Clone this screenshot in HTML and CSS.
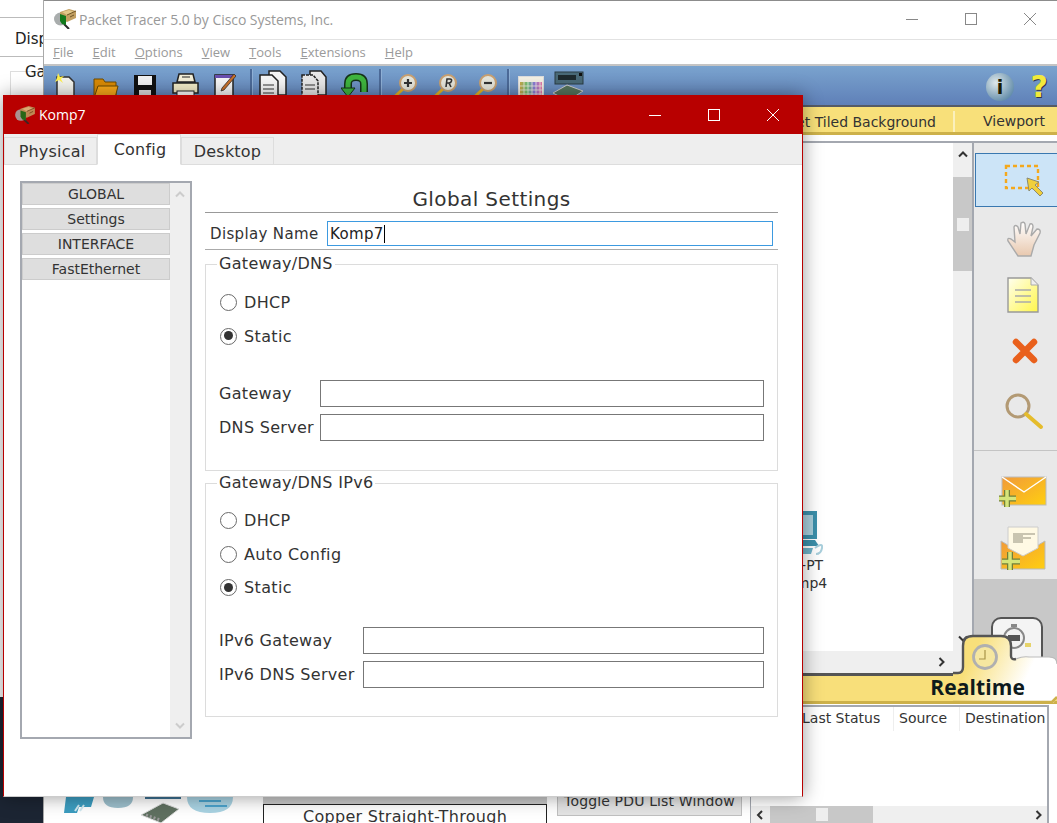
FILE: index.html
```html
<!DOCTYPE html>
<html lang="en">
<head>
<meta charset="UTF-8" />
<title>Packet Tracer 5.0 by Cisco Systems, Inc.</title>
<link rel="stylesheet" href="styles.css">
</head>
<body>

<svg class="defs" width="0" height="0">
  <symbol id="pt-logo" viewBox="0 0 22 20">
    <circle cx="6.500" cy="10" r="6.500" fill="#a9adad"/>
    <path d="M10 15 L15 20" stroke="#2a2a2a" stroke-width="2"/>
    <path d="M6 3 L15 0 L22 2 L22 9 L13 13 L6 9Z" fill="#c2a062"/>
    <path d="M8 3 L15 1 L20 3 L13 6Z" fill="#e2c98a"/>
    <path d="M6 5 L12 7 L12 16 L8 15 L6 12Z" fill="#127a1c"/>
    <path d="M13 6 L22 2 M16 8 L20 6" stroke="#6f5526"/>
  </symbol>
</svg>

<!-- ventana de atras -->
<div class="back-window">
  <div class="back-disp">Display Name</div>
  <div class="back-group">Gateway/DNS</div>
  <div class="back-dark"></div>
</div>

<!-- ventana principal -->
<div class="main-window">
  <div class="titlebar">
    <svg class="logo" width="22" height="20"><use href="#pt-logo"/></svg>
    <span class="title-text">Packet Tracer 5.0 by Cisco Systems, Inc.</span>
    <div class="win-buttons">
      <svg width="14" height="14" viewBox="0 0 14 14"><path d="M1 7.500H13" stroke="#888"/></svg>
      <svg width="14" height="14" viewBox="0 0 14 14"><rect x="1.500" y="1.500" width="11" height="11" fill="none" stroke="#888"/></svg>
      <svg width="14" height="14" viewBox="0 0 14 14"><path d="M1 1L13 13M13 1L1 13" stroke="#888"/></svg>
    </div>
  </div>

  <div class="menubar">
    <span><u>F</u>ile</span>
    <span><u>E</u>dit</span>
    <span><u>O</u>ptions</span>
    <span><u>V</u>iew</span>
    <span><u>T</u>ools</span>
    <span><u>E</u>xtensions</span>
    <span><u>H</u>elp</span>
  </div>

  <div class="toolbar">
    <svg class="tool t-new" width="22" height="30" viewBox="0 0 22 30"><path d="M3 4H15L20 9V29H3Z" fill="#f4f4ee" stroke="#333" stroke-width="1.500"/><path d="M4 0L6 4L10 3L7 6L9 10L5 7L1 9L3 5Z" fill="#fff04d"/></svg>
    <svg class="tool t-open" width="26" height="24" viewBox="0 0 26 24"><path d="M1 3H10L12 6H23V22H1Z" fill="#d98a06" stroke="#6d4a00"/><path d="M1 22L5 10H25L22 22Z" fill="#f9a81a" stroke="#6d4a00"/></svg>
    <svg class="tool t-save" width="22" height="24" viewBox="0 0 22 24"><path d="M0 0H22V24H0Z" fill="#111"/><rect x="4" y="1" width="14" height="9" fill="#f2f2f2"/><rect x="5" y="15" width="12" height="9" fill="#ddd"/></svg>
    <svg class="tool t-print" width="27" height="24" viewBox="0 0 27 24"><path d="M7 1H21L23 9H5Z" fill="#f4efd8" stroke="#222" stroke-width="1.500"/><path d="M10 4H18" stroke="#222"/><path d="M1 10H26V20H1Z" fill="#f3ecc8" stroke="#222" stroke-width="1.500"/><rect x="5" y="18" width="17" height="6" fill="#fff" stroke="#222"/></svg>
    <svg class="tool t-note" width="22" height="26" viewBox="0 0 22 26"><path d="M1 3H19V25H1Z" fill="#f6f6f6" stroke="#222" stroke-width="1.500"/><rect x="1" y="3" width="18" height="3" fill="#6a4fb0"/><path d="M8 16L20 2L22 4L10 18L7 19Z" fill="#c8702a" stroke="#222" stroke-width=".7"/></svg>
    <div class="tool-sep t-sep1"></div>
    <svg class="tool t-copy" width="28" height="30" viewBox="0 0 28 30"><path d="M10 1H21L27 7V25H10Z" fill="#f6f6f6" stroke="#222" stroke-width="1.500"/><path d="M1 5H13L19 11V30H1Z" fill="#f6f6f6" stroke="#222" stroke-width="1.500"/><path d="M4 15H15M4 19H15M4 23H15" stroke="#333"/></svg>
    <svg class="tool t-paste" width="26" height="30" viewBox="0 0 26 30"><path d="M9 1H20L25 7V25H9Z" fill="#e8e8e8" stroke="#222" stroke-width="1.500"/><path d="M1 5H12L17 11V30H1Z" fill="#e8e8e8" stroke="#222" stroke-width="1.500" stroke-dasharray="3 1"/><path d="M4 15H14M4 19H14" stroke="#333"/></svg>
    <svg class="tool t-undo" width="28" height="28" viewBox="0 0 28 28"><path d="M7 18V12Q7 5 15 5Q23 5 23 12V20" fill="none" stroke="#16331a" stroke-width="8"/><path d="M7 18V12Q7 5 15 5Q23 5 23 12V20" fill="none" stroke="#3fb53f" stroke-width="5"/><path d="M0 16H14L7 25Z" fill="#3fb53f" stroke="#16331a"/></svg>
    <div class="tool-sep t-sep2"></div>
    <svg class="tool t-zoom" width="30" height="30" viewBox="0 0 30 30"><path d="M2 28L15 16" stroke="#e9b320" stroke-width="3"/><circle cx="20" cy="10" r="8" fill="#e6e6dc" stroke="#c9a070" stroke-width="2"/><path d="M16 10H24M20 6V14" stroke="#333" stroke-width="2.200"/></svg>
    <svg class="tool t-zoomr" width="30" height="30" viewBox="0 0 30 30"><path d="M2 28L15 16" stroke="#e9b320" stroke-width="3"/><circle cx="20" cy="10" r="8" fill="#e6e6dc" stroke="#c9a070" stroke-width="2"/><path d="M18 14L19 6H22Q24 6 23.500 8T21 10H18.500M21 10L23 14" fill="none" stroke="#333" stroke-width="1.600"/></svg>
    <svg class="tool t-zoomo" width="30" height="30" viewBox="0 0 30 30"><path d="M2 28L15 16" stroke="#e9b320" stroke-width="3"/><circle cx="20" cy="10" r="8" fill="#e6e6dc" stroke="#c9a070" stroke-width="2"/><path d="M16 10H24" stroke="#333" stroke-width="2.200"/></svg>
    <div class="tool-sep t-sep3"></div>
    <svg class="tool t-palette" width="26" height="24" viewBox="0 0 26 24">
      <defs><linearGradient id="pal" x1="0" x2="1"><stop offset="0" stop-color="#c9a84a"/><stop offset=".35" stop-color="#6cc47c"/><stop offset=".65" stop-color="#8a7ad8"/><stop offset="1" stop-color="#e878a8"/></linearGradient></defs>
      <rect x=".5" y=".5" width="25" height="23" fill="#f4f0e4" stroke="#ddd"/>
      <rect x="2" y="6" width="22" height="17" fill="url(#pal)"/>
      <path d="M6 6V23M10 6V23M14 6V23M18 6V23M22 6V23M2 10H24M2 14H24M2 18H24" stroke="#f4f0e4" stroke-width=".8"/>
    </svg>
    <svg class="tool t-device" width="32" height="30" viewBox="0 0 32 30"><rect x="2" y="1" width="28" height="12" fill="#4a6a78" stroke="#2a3c44"/><rect x="5" y="4" width="18" height="5" fill="#1e2a2e"/><rect x="26" y="2" width="3" height="3" fill="#111"/><path d="M0 22L14 14L30 20L15 30Z" fill="#55745c" stroke="#ccc"/></svg>
    <div class="toolbar-right">
      <svg width="28" height="30" viewBox="0 0 28 30"><defs><radialGradient id="infob" cx=".35" cy=".35" r=".75"><stop offset="0" stop-color="#dfe8ea"/><stop offset="1" stop-color="#5b87a6"/></radialGradient></defs><circle cx="14" cy="15" r="14" fill="url(#infob)"/><text x="14" y="22" class="info-i">i</text></svg>
      <span class="help-q">?</span>
    </div>
  </div>

  <div class="yellowbar">
    <span class="yb-item yb-tiled">Set Tiled Background</span>
    <span class="yb-item yb-view">Viewport</span>
  </div>

  <div class="work-row">
    <div class="canvas-col">
      <div class="canvas-line">
        <div class="canvas">
          <div class="node">
            <svg width="40" height="46" viewBox="0 0 40 46"><rect x="8" y="1" width="26" height="28" fill="#3c90ab"/><rect x="12" y="5" width="18" height="20" fill="#a9cfdc"/><path d="M12 30H32L36 36H8Z" fill="#3c90ab"/><path d="M10 38H30L28 44H8Z" fill="#6fb3c9"/><path d="M32 38Q40 32 39 38T33 44" fill="none" stroke="#a9cfdc" stroke-width="2"/></svg>
            <div>PC-PT</div>
            <div>Komp4</div>
          </div>
        </div>
        <div class="vscroll">
          <svg class="sb-arrow" width="12" height="8" viewBox="0 0 12 8"><path d="M2 6.500L6 2.500L10 6.500" fill="none" stroke="#333" stroke-width="2"/></svg>
          <div class="vthumb"><span class="grip"></span></div>
          <svg class="sb-down" width="12" height="8" viewBox="0 0 12 8"><path d="M2 1.500L6 5.500L10 1.500" fill="none" stroke="#333" stroke-width="2"/></svg>
        </div>
      </div>
      <div class="hscroll">
        <svg width="8" height="12" viewBox="0 0 8 12"><path d="M1.500 2L5.500 6L1.500 10" fill="none" stroke="#333" stroke-width="2"/></svg>
      </div>
    </div>

    <div class="side">
      <div class="side-tools">
        <div class="side-btn selected">
          <svg width="40" height="36" viewBox="0 0 40 36"><rect x="2" y="2" width="32" height="22" fill="none" stroke="#f4a81c" stroke-width="2.400" stroke-dasharray="4 3"/><path d="M23 14L25 27L28 24L36 32L39 29L31 21L35 18Z" fill="#f0cf3c" stroke="#8a8a70"/></svg>
        </div>
        <svg class="side-icon hand" width="38" height="36" viewBox="0 0 38 36"><defs><linearGradient id="handg" x1="0" y1="0" x2="0" y2="1"><stop offset="0" stop-color="#fff"/><stop offset="1" stop-color="#e8c8ae"/></linearGradient></defs><path d="M12 35L2 20Q1 16 5 18L9 21L8 6Q9 3 12 6L14 13L15 2Q18 0 19 3L20 13L24 3Q27 2 27 6L25 15L31 8Q35 8 34 12L28 24L25 35Z" fill="url(#handg)" stroke="#aaa" stroke-width="1.400"/></svg>
        <svg class="side-icon note" width="32" height="36" viewBox="0 0 32 36"><defs><linearGradient id="noteg" x1="0" y1="0" x2="1" y2="1"><stop offset="0" stop-color="#fffff0"/><stop offset="1" stop-color="#fff64a"/></linearGradient></defs><path d="M1 1H24L31 8V35H1Z" fill="url(#noteg)" stroke="#999" stroke-width="1.400"/><path d="M24 1V8H31" fill="#eee" stroke="#aaa"/><path d="M8 13H24M8 19H24M8 25H24" stroke="#aaa" stroke-width="1.600"/></svg>
        <svg class="side-icon del" width="26" height="26" viewBox="0 0 26 26"><path d="M4 4L22 22M22 4L4 22" stroke="#e9601c" stroke-width="6.500" stroke-linecap="round"/></svg>
        <svg class="side-icon mag" width="40" height="38" viewBox="0 0 40 38"><circle cx="14" cy="14" r="11" fill="none" stroke="#b39a74" stroke-width="3"/><path d="M22 22L37 35" stroke="#e5bc2c" stroke-width="4" stroke-linecap="round"/></svg>
      </div>
      <div class="side-mail">
        <svg class="mail1" width="50" height="32" viewBox="0 0 50 32"><defs><linearGradient id="mailg" x1="0" y1="0" x2="1" y2="1"><stop offset="0" stop-color="#f19a3a"/><stop offset="1" stop-color="#ffcf10"/></linearGradient></defs><rect x="5" y="1" width="44" height="28" fill="url(#mailg)" stroke="#bbb"/><path d="M5 1L27 16L49 1" fill="none" stroke="#fff" stroke-width="1.400"/><path d="M10 14V31M2 22.500H19" stroke="#6f7f3a" stroke-width="6"/><path d="M10 14V31M2 22.500H19" stroke="#d5e57a" stroke-width="3.500"/></svg>
        <svg class="mail2" width="46" height="46" viewBox="0 0 46 46"><path d="M1 15L23 28L45 15V43H1Z" fill="url(#mailg)" stroke="#bbb"/><path d="M8 1H38V22L23 30L8 22Z" fill="#fff9e4" stroke="#ccc"/><rect x="13" y="7" width="10" height="10" fill="#c9c4b0"/><path d="M23 8H35M23 12H31" stroke="#c9c4b0" stroke-width="2"/><path d="M10 26V44M2 35.500H20" stroke="#6f7f3a" stroke-width="6"/><path d="M10 26V44M2 35.500H20" stroke="#d5e57a" stroke-width="3.500"/></svg>
      </div>
      <div class="side-sim">
        <div class="sim-btn">
          <svg width="36" height="30" viewBox="0 0 36 30"><circle cx="15" cy="15" r="10" fill="#f2f2f2" stroke="#888" stroke-width="2"/><rect x="9" y="12" width="12" height="6" fill="#555"/><rect x="12" y="1" width="6" height="3" fill="#888"/><rect x="26" y="20" width="6" height="4" fill="#e6d36a"/></svg>
        </div>
      </div>
    </div>
  </div>

  <div class="realtime-bar">
    <span class="realtime-text">Realtime</span>
  </div>
  <svg class="realtime-tab" width="104" height="72" viewBox="0 0 104 72">
    <defs><linearGradient id="tabg" x1="0" y1="0" x2="1" y2=".3"><stop offset=".25" stop-color="#f8df7a"/><stop offset=".82" stop-color="#fff"/></linearGradient></defs>
    <path d="M0 39H5Q10 39 10 33V12Q10 2 20 2H48Q58 2 58 12V22Q58 26 63 25Q70 22 76 23H96Q104 23 104 30V64L100 69H0Z" fill="url(#tabg)"/>
    <path d="M0 39H5Q10 39 10 33V12Q10 2 20 2H48Q58 2 58 12V22Q58 26 63 25" fill="none" stroke="#555" stroke-width="2.400"/>
    <path d="M63 25Q70 22 76 23H96Q104 23 104 30" fill="none" stroke="#bbb" stroke-width="1.200"/>
    <path d="M0 68H99L104 63" fill="none" stroke="#cdb14a" stroke-width="2.500"/>
    <circle cx="32" cy="23" r="11.500" fill="#f6e7a0" stroke="#b0b0b0" stroke-width="2.800"/>
    <path d="M32 16V25H26" fill="none" stroke="#a89448" stroke-width="1.200"/>
  </svg>

  <div class="bottom-row">
    <div class="devices">
      <svg width="34" height="16" viewBox="0 0 34 16"><path d="M3 0H31L28 10H16L14 16H1Z" fill="#3c9dc0"/><path d="M12 14L16 8M17 14L21 8" stroke="#cfe8f0" stroke-width="2"/></svg>
      <svg width="30" height="11" viewBox="0 0 30 11"><path d="M0 0H30Q30 11 15 11T0 0Z" fill="#9cbfcc"/></svg>
      <svg width="42" height="26" viewBox="0 0 42 26"><rect x="6" y="0" width="36" height="2" fill="#3c6f90"/><path d="M2 18L24 6L40 12L22 26Z" fill="#5f7060" stroke="#ddd"/><path d="M7 18L21 23" stroke="#999" stroke-width="3" stroke-dasharray="2 2"/></svg>
      <svg width="46" height="16" viewBox="0 0 46 16"><path d="M0 0H46Q46 16 23 16T0 0Z" fill="#a9d3e3"/><path d="M12 4H34M18 9H40" stroke="#4aa3cc" stroke-width="2"/></svg>
    </div>
    <div class="cable-col">
      <div class="cable-thumb"></div>
      <div class="cable-box">Copper Straight-Through</div>
    </div>
    <div class="toggle-btn">Toggle PDU List Window</div>
    <div class="pdu">
      <div class="pdu-head">
        <span class="ph-status">Last Status</span>
        <span class="ph-source">Source</span>
        <span class="ph-dest">Destination</span>
      </div>
      <div class="pdu-scroll">
        <svg class="pdu-left" width="8" height="12" viewBox="0 0 8 12"><path d="M6 2L2 6L6 10" fill="none" stroke="#333" stroke-width="2"/></svg>
        <div class="pdu-thumb"><span class="grip"></span></div>
        <svg class="pdu-right" width="8" height="12" viewBox="0 0 8 12"><path d="M1.500 2L5.500 6L1.500 10" fill="none" stroke="#333" stroke-width="2"/></svg>
      </div>
    </div>
  </div>
</div>

<!-- dialogo Komp7 -->
<div class="dialog">
  <div class="dlg-title">
    <svg class="dlg-logo" width="20" height="18"><use href="#pt-logo"/></svg>
    <span class="dlg-name">Komp7</span>
    <div class="dlg-buttons">
      <svg width="14" height="14" viewBox="0 0 14 14"><path d="M1 7.500H13" stroke="#fff"/></svg>
      <svg width="14" height="14" viewBox="0 0 14 14"><rect x="1.500" y="1.500" width="11" height="11" fill="none" stroke="#fff"/></svg>
      <svg width="14" height="14" viewBox="0 0 14 14"><path d="M1 1L13 13M13 1L1 13" stroke="#fff"/></svg>
    </div>
  </div>

  <div class="tabs">
    <div class="tab tab-physical">Physical</div>
    <div class="tab tab-config active">Config</div>
    <div class="tab tab-desktop">Desktop</div>
  </div>

  <div class="dlg-body">
    <div class="sidelist">
      <div class="list-items">
        <div class="list-item">GLOBAL</div>
        <div class="list-item">Settings</div>
        <div class="list-item">INTERFACE</div>
        <div class="list-item">FastEthernet</div>
      </div>
      <div class="list-scroll">
        <svg width="12" height="8" viewBox="0 0 12 8"><path d="M2 6.500L6 2.500L10 6.500" fill="none" stroke="#ccc" stroke-width="2"/></svg>
        <svg width="12" height="8" viewBox="0 0 12 8"><path d="M2 1.500L6 5.500L10 1.500" fill="none" stroke="#ccc" stroke-width="2"/></svg>
      </div>
    </div>

    <div class="settings">
      <h2 class="settings-title">Global Settings</h2>
      <div class="name-row">
        <label>Display Name</label>
        <div class="name-input">Komp7<span class="caret"></span></div>
      </div>

      <fieldset class="group group-dns">
        <legend>Gateway/DNS</legend>
        <label class="radio-row"><span class="radio"></span>DHCP</label>
        <label class="radio-row"><span class="radio on"></span>Static</label>
        <div class="field-row first">
          <label class="lbl-dns">Gateway</label>
          <input type="text" />
        </div>
        <div class="field-row">
          <label class="lbl-dns">DNS Server</label>
          <input type="text" />
        </div>
      </fieldset>

      <fieldset class="group group-v6">
        <legend>Gateway/DNS IPv6</legend>
        <label class="radio-row"><span class="radio"></span>DHCP</label>
        <label class="radio-row"><span class="radio"></span>Auto Config</label>
        <label class="radio-row"><span class="radio on"></span>Static</label>
        <div class="field-row first">
          <label class="lbl-v6">IPv6 Gateway</label>
          <input type="text" />
        </div>
        <div class="field-row">
          <label class="lbl-v6">IPv6 DNS Server</label>
          <input type="text" />
        </div>
      </fieldset>
    </div>
  </div>
</div>

</body>
</html>
```

FILE: styles.css
```css
html, body {
  margin: 0;
  height: 100%;
  overflow: hidden;
  background: #fff;
}
body {
  position: relative;
  width: 1057px;
  height: 823px;
  font-family: "DejaVu Sans", sans-serif;
  color: #222;
}
.defs {
  position: absolute;
}

/* ventana de atras */
.back-window {
  position: absolute;
  left: 0;
  top: 0;
  width: 44px;
  height: 823px;
  overflow: hidden;
  background: #fff;
}
.back-disp {
  margin-top: 17px;
  height: 38px;
  line-height: 42px;
  padding-left: 15px;
  white-space: nowrap;
  font-size: 15px;
  border-top: 1px solid #bbb;
  border-bottom: 1px solid #bbb;
}
.back-group {
  margin: 14px 0 0 10px;
  width: 200px;
  height: 300px;
  padding-left: 14px;
  white-space: nowrap;
  font-size: 15px;
  line-height: 0;
  border: 1px solid #ddd;
}
.back-dark {
  position: absolute;
  left: 0;
  top: 697px;
  width: 44px;
  height: 126px;
  background: #1c2533;
}

/* ventana principal */
.main-window {
  position: absolute;
  left: 44px;
  top: 0;
  width: 1013px;
  height: 823px;
  overflow: hidden;
  background: #fff;
  display: flex;
  flex-direction: column;
  border-top: 1px solid #8c8c8c;
  box-sizing: border-box;
  box-shadow: -1px 0 0 #aaa;
}
.titlebar {
  flex: none;
  height: 36px;
  padding-bottom: 2px;
  display: flex;
  align-items: center;
  border-bottom: 1px solid #e2e2e2;
}
.logo {
  margin-left: 10px;
  margin-right: 3px;
}
.title-text {
  font-family: "Open Sans", sans-serif;
  font-size: 14px;
  letter-spacing: -.05px;
  color: #999;
}
.win-buttons {
  margin-left: auto;
  display: flex;
  gap: 45px;
  padding-right: 20px;
}
.menubar {
  flex: none;
  height: 24px;
  padding-left: 9px;
  display: flex;
  align-items: center;
  gap: 19px;
  font-family: "Open Sans", sans-serif;
  font-size: 13px;
  color: #9a9a9a;
  border-bottom: 2px solid #c4c4c4;
}
.toolbar {
  flex: none;
  height: 41px;
  box-sizing: border-box;
  display: flex;
  align-items: flex-start;
  padding-top: 6px;
  background: linear-gradient(#7aa3ce, #5f80b8);
  border-bottom: 2px solid #555b66;
  position: relative;
}
.tool {
  flex: none;
}
.t-new { margin: 1px 0 0 10px; }
.t-open { margin: 4px 0 0 17px; }
.t-save { margin: 3px 0 0 15px; }
.t-print { margin: 1px 0 0 16px; }
.t-note { margin: 0 0 0 15px; }
.tool-sep {
  flex: none;
  width: 2px;
  height: 37px;
  margin-top: -3px;
  background: #4c6a98;
  border-right: 1px solid #8fb0d6;
}
.t-sep1 { margin-left: 14px; }
.t-copy { margin: -2px 0 0 6px; }
.t-paste { margin: -2px 0 0 14px; }
.t-undo { margin: 0 0 0 14px; }
.t-sep2 { margin-left: 10px; }
.t-zoom { margin: 1px 0 0 6px; }
.t-zoomr { margin: 1px 0 0 10px; }
.t-zoomo { margin: 1px 0 0 10px; }
.t-sep3 { margin-left: 9px; }
.t-palette { margin: 4px 0 0 8px; }
.t-device { margin: -1px 0 0 9px; }
.toolbar-right {
  margin-left: auto;
  padding-right: 9px;
  display: flex;
  align-items: center;
  gap: 17px;
}
.info-i {
  font-family: "DejaVu Sans", sans-serif;
  font-weight: bold;
  font-size: 19px;
  text-anchor: middle;
  fill: #1b1b00;
}
.help-q {
  font-family: "DejaVu Sans", sans-serif;
  font-weight: bold;
  font-size: 30px;
  line-height: 30px;
  color: #f2ea3a;
  text-shadow: 1px 1px 0 #334;
}
.yellowbar {
  flex: none;
  height: 28px;
  box-sizing: border-box;
  padding-top: 4px;
  background: #f8e07a;
  border-bottom: 3px solid #cdb14a;
  display: flex;
  justify-content: flex-end;
  align-items: center;
  font-size: 14px;
  color: #333;
}
.yb-item {
  white-space: nowrap;
}
.yb-view {
  width: 104px;
  box-sizing: border-box;
  padding-left: 28px;
  margin-left: 17px;
  border-left: 2px solid #fbf0bc;
  line-height: 21px;
}
.work-row {
  flex: none;
  margin-top: 6px;
  height: 532px;
  display: flex;
  border-top: 2px solid #a4a8b0;
  box-sizing: border-box;
}
.canvas-col {
  flex: none;
  width: 928px;
  display: flex;
  flex-direction: column;
  border-right: 2px solid #a4a8b0;
}
.canvas-line {
  flex: 1;
  display: flex;
  min-height: 0;
}
.canvas {
  flex: 1;
  position: relative;
  background: #fff;
}
.node {
  position: absolute;
  left: 739px;
  top: 367px;
  width: 40px;
  font-size: 14px;
  line-height: 18px;
  white-space: nowrap;
  display: flex;
  flex-direction: column;
  align-items: center;
  color: #333;
}
.vscroll {
  flex: none;
  width: 19px;
  background: #efefef;
  display: flex;
  flex-direction: column;
  align-items: center;
}
.sb-arrow {
  margin-top: 7px;
}
.sb-down {
  margin-top: auto;
  margin-bottom: 8px;
}
.vthumb {
  margin-top: 19px;
  width: 100%;
  height: 94px;
  background: #c8c8c8;
  display: flex;
  align-items: center;
  justify-content: center;
}
.grip {
  display: block;
  width: 12px;
  height: 13px;
  background: #eee;
}
.hscroll {
  flex: none;
  height: 22px;
  background: #efefef;
  display: flex;
  align-items: center;
  justify-content: flex-end;
  padding-right: 26px;
}
.side {
  flex: 1;
  background: #e9e9e9;
  display: flex;
  flex-direction: column;
}
.side-tools {
  height: 308px;
  display: flex;
  flex-direction: column;
  align-items: center;
  border-bottom: 1px solid #c4c4c4;
  padding-top: 10px;
  box-sizing: border-box;
}
.side-btn.selected {
  align-self: stretch;
  margin-left: 1px;
  height: 54px;
  box-sizing: border-box;
  background: #cce4f7;
  border: 1px solid #3a78b0;
  border-right: none;
  display: flex;
  align-items: center;
  justify-content: center;
  padding-left: 14px;
  padding-top: 4px;
}
.side-icon {
  display: block;
}
.hand { margin-top: 14px; margin-left: 18px; }
.note { margin-top: 20px; margin-left: 15px; }
.del { margin-top: 25px; margin-left: 18px; }
.mag { margin-top: 28px; margin-left: 16px; }
.side-mail {
  height: 128px;
  position: relative;
  display: flex;
  flex-direction: column;
  align-items: center;
}
.mail1 { margin-top: 25px; margin-left: 12px; }
.mail2 { margin-top: 18px; margin-left: 15px; }
.side-sim {
  flex: 1;
  background: #c8c8c8;
  padding: 38px 0 0 17px;
  overflow: hidden;
}
.sim-btn {
  width: 52px;
  height: 50px;
  background: #f4f4f4;
  border: 2px solid #555;
  border-radius: 10px;
  display: flex;
  justify-content: center;
  padding-top: 4px;
  box-sizing: border-box;
}
.realtime-bar {
  flex: none;
  height: 31px;
  box-sizing: border-box;
  background: #f8df7a;
  border-top: 3px solid #555;
  border-bottom: 3px solid #cdb14a;
  display: flex;
  justify-content: flex-end;
  align-items: center;
  padding-right: 32px;
  padding-bottom: 3px;
}
.realtime-text {
  font-family: "Open Sans", sans-serif;
  font-weight: bold;
  font-size: 21px;
  letter-spacing: .1px;
  color: #0e1a1c;
  position: relative;
  z-index: 4;
}
.realtime-tab {
  position: absolute;
  left: 909px;
  top: 633px;
  z-index: 2;
}
.bottom-row {
  flex: 1;
  display: flex;
  align-items: flex-end;
  position: relative;
  z-index: 3;
  min-height: 0;
}
.devices {
  flex: none;
  width: 200px;
  display: flex;
  align-self: flex-end;
  align-items: flex-start;
  gap: 6px;
  padding-left: 19px;
  height: 26px;
}
.cable-col {
  flex: none;
  width: 284px;
  display: flex;
  flex-direction: column;
}
.cable-thumb {
  height: 7px;
  background: #c8c8c8;
}
.cable-box {
  height: 19px;
  box-sizing: border-box;
  border: 1px solid #222;
  border-bottom: none;
  text-align: center;
  font-size: 16px;
  letter-spacing: .3px;
  line-height: 23px;
  white-space: nowrap;
  background: #fff;
  color: #333;
}
.toggle-btn {
  flex: none;
  margin: 0 8px 7px 10px;
  width: 185px;
  height: 24px;
  box-sizing: border-box;
  background: #e4e4e4;
  border: 1px solid #c0c0c0;
  text-align: center;
  font-size: 14px;
  letter-spacing: .15px;
  line-height: 17px;
  white-space: nowrap;
  color: #333;
}
.pdu {
  flex: none;
  width: 296px;
  align-self: stretch;
  margin-top: 1px;
  border-top: 2px solid #a4a8b0;
  border-right: 2px solid #a4a8b0;
  border-left: 1px solid #a4a8b0;
  display: flex;
  flex-direction: column;
  justify-content: space-between;
  background: #fff;
}
.pdu-head {
  position: relative;
  height: 22px;
  font-size: 14px;
  color: #333;
  line-height: 22px;
  white-space: nowrap;
}
.pdu-head span {
  position: absolute;
  top: 0;
  height: 24px;
}
.ph-status { left: 51px; }
.ph-source {
  left: 142px;
  padding-left: 5px;
  border-left: 1px solid #eee;
}
.ph-dest {
  left: 208px;
  padding-left: 5px;
  border-left: 1px solid #eee;
}
.pdu-scroll {
  height: 17px;
  background: #efefef;
  display: flex;
  align-items: center;
}
.pdu-left { margin-left: 5px; }
.pdu-thumb {
  margin-left: 6px;
  width: 103px;
  height: 100%;
  background: #c8c8c8;
  display: flex;
  justify-content: center;
  align-items: center;
}
.pdu-right { margin-left: auto; margin-right: 4px; }

/* dialogo */
.dialog {
  position: absolute;
  left: 3px;
  top: 95px;
  width: 800px;
  height: 702px;
  box-sizing: border-box;
  background: #fff;
  border: 1px solid #b80000;
  border-top: none;
  border-bottom-color: #ccc;
  box-shadow: 0 0 18px rgba(0, 0, 0, .4);
  display: flex;
  flex-direction: column;
  z-index: 10;
}
.dlg-title {
  flex: none;
  height: 39px;
  margin: 0 -1px;
  background: #b80000;
  display: flex;
  align-items: center;
}
.dlg-logo {
  margin-left: 12px;
  margin-right: 4px;
  opacity: .85;
}
.dlg-name {
  font-family: "Open Sans", sans-serif;
  font-size: 14px;
  color: #fff;
}
.dlg-buttons {
  margin-left: auto;
  display: flex;
  gap: 45px;
  padding-right: 23px;
}
.tabs {
  flex: none;
  height: 31px;
  background: #eee;
  display: flex;
  align-items: flex-end;
  border-bottom: 1px solid #ddd;
  box-sizing: border-box;
  font-size: 16px;
  letter-spacing: .2px;
  color: #333;
}
.tab {
  height: 27px;
  box-sizing: border-box;
  text-align: center;
  line-height: 27px;
  border: 1px solid #ddd;
  border-bottom: none;
}
.tab-physical {
  width: 93px;
  padding-left: 3px;
}
.tab-config {
  width: 84px;
  height: 31px;
  padding-left: 2px;
  background: #fff;
  line-height: 30px;
  margin-bottom: -1px;
  border-bottom: 1px solid #fff;
}
.tab-desktop { width: 93px; }
.dlg-body {
  flex: 1;
  display: flex;
  align-items: flex-start;
  padding: 16px 0 0 16px;
}
.sidelist {
  flex: none;
  width: 172px;
  height: 558px;
  box-sizing: border-box;
  border: 2px solid #a4a8b0;
  display: flex;
}
.list-items {
  flex: 1;
  display: flex;
  flex-direction: column;
  gap: 3px;
}
.list-item {
  height: 22px;
  box-sizing: border-box;
  background: #dedede;
  border: 1px solid #ccc;
  text-align: center;
  font-size: 14px;
  line-height: 20px;
  color: #333;
}
.list-scroll {
  flex: none;
  width: 20px;
  background: #efefef;
  display: flex;
  flex-direction: column;
  justify-content: space-between;
  align-items: center;
  padding: 7px 0;
  box-sizing: border-box;
}
.settings {
  flex: none;
  width: 573px;
  margin-left: 13px;
}
.settings-title {
  margin: 6px 0 0;
  height: 25px;
  font-weight: normal;
  font-size: 20px;
  letter-spacing: .4px;
  line-height: 24px;
  text-align: center;
  color: #333;
  border-bottom: 1px solid #999;
}
.name-row {
  height: 37px;
  box-sizing: border-box;
  display: flex;
  align-items: flex-start;
  padding: 8px 5px 0;
  border-bottom: 1px solid #aaa;
  font-size: 15px;
  letter-spacing: .35px;
}
.name-row label {
  flex: none;
  width: 117px;
  line-height: 27px;
  color: #333;
}
.name-input {
  width: 447px;
  height: 25px;
  box-sizing: border-box;
  border: 1.5px solid #3d9ae0;
  padding-left: 2px;
  line-height: 22px;
  color: #222;
  display: flex;
  align-items: center;
}
.caret {
  display: inline-block;
  width: 1px;
  height: 18px;
  background: #000;
}
.group {
  margin: 14px 0 0;
  padding: 0 13px;
  border: 1px solid #dcdcdc;
  box-sizing: border-box;
  min-width: 0;
}
.group legend {
  padding: 0 2px;
  margin-left: -2px;
  font-size: 16px;
  letter-spacing: .3px;
  color: #333;
  line-height: 18px;
}
.group-dns {
  height: 216px;
  margin-top: 5px;
}
.group-v6 {
  height: 243px;
  margin-top: 3px;
}
.radio-row {
  display: flex;
  align-items: center;
  height: 34px;
  font-size: 16px;
  letter-spacing: .35px;
  color: #333;
  gap: 7px;
}
.group .radio-row:first-of-type {
  margin-top: 12px;
}
.group-v6 .radio-row {
  height: 33.500px;
}
.radio {
  flex: none;
  width: 17px;
  height: 17px;
  margin-left: 1px;
  box-sizing: border-box;
  border: 1.5px solid #6a6a6a;
  border-radius: 50%;
  background: #fff;
  position: relative;
}
.radio.on::after {
  content: "";
  position: absolute;
  left: 2.500px;
  top: 2.500px;
  width: 9px;
  height: 9px;
  border-radius: 50%;
  background: #333;
}
.field-row {
  display: flex;
  align-items: center;
  height: 27px;
  margin-top: 7px;
  font-size: 16px;
  letter-spacing: .3px;
  color: #333;
}
.field-row.first {
  margin-top: 27px;
}
.group-v6 .field-row.first {
  margin-top: 22.500px;
}
.lbl-dns {
  flex: none;
  width: 101px;
}
.lbl-v6 {
  flex: none;
  width: 144px;
  white-space: nowrap;
}
.field-row input {
  flex: none;
  height: 27px;
  box-sizing: border-box;
  border: 1px solid #777;
  background: #fff;
  padding: 0 3px;
  outline: none;
}
.lbl-dns + input {
  width: 444px;
}
.lbl-v6 + input {
  width: 401px;
}
```
